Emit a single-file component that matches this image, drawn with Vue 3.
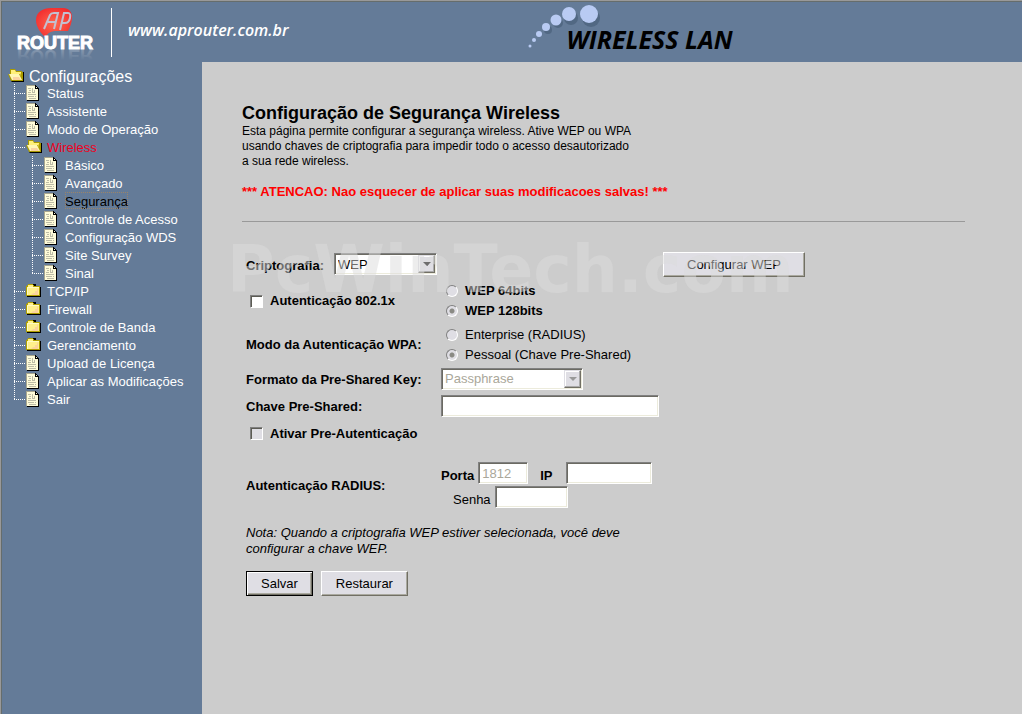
<script setup>
import { ref } from 'vue'

const menu = [
  { label: 'Status', icon: 'page' },
  { label: 'Assistente', icon: 'page' },
  { label: 'Modo de Operação', icon: 'page' },
  {
    label: 'Wireless',
    icon: 'open',
    active: true,
    children: [
      { label: 'Básico' },
      { label: 'Avançado' },
      { label: 'Segurança', current: true },
      { label: 'Controle de Acesso' },
      { label: 'Configuração WDS' },
      { label: 'Site Survey' },
      { label: 'Sinal' },
    ],
  },
  { label: 'TCP/IP', icon: 'folder' },
  { label: 'Firewall', icon: 'folder' },
  { label: 'Controle de Banda', icon: 'folder' },
  { label: 'Gerenciamento', icon: 'folder' },
  { label: 'Upload de Licença', icon: 'page' },
  { label: 'Aplicar as Modificações', icon: 'page' },
  { label: 'Sair', icon: 'page' },
]

const encryption = ref('WEP')
const keyFormat = ref('Passphrase')
const use8021x = ref(false)
const wepBits = ref('128')
const wpaMode = ref('psk')
const preAuth = ref(false)
const psk = ref('')
const radiusPort = ref('1812')
const radiusIp = ref('')
const radiusPassword = ref('')
</script>

<template>
  <div class="page">
    <svg class="defs" aria-hidden="true">
      <symbol id="icon-page" viewBox="0 0 16 16">
        <path d="M1 15h11V4h1v12H1z" fill="#000" />
        <path d="M0 0h9l3 3v12H0z" fill="#fffcd9" />
        <path d="M9 0h1v1h1v1h1v1h1v2h-1V4H9z" fill="#000" />
        <path d="M10 2h1v1h-1z" fill="#fffcd9" />
        <path d="M2 3.5h3M3 5.5h2M2 7.5h3M6.5 3v5M7 7.500h2M8.500 5v2M2 9.500h8M2 11.500h6M9 11.500h1M3 13.500h7" stroke="#bdbca6" fill="none" />
        <path d="M0 .5h9M.5 1v14" stroke="#a8a68e" fill="none" />
      </symbol>
      <symbol id="icon-folder" viewBox="0 0 16 16">
        <path d="M7 1h3v2h4v1h1v10H1v-1h6z" fill="#000" />
        <path d="M0 3h1V2h1V1h5v1h1v1h6v10H0z" fill="#b0a000" />
        <path d="M1 4h1V2h5v2h6v8H1z" fill="#fff08c" />
        <path d="M12 5v7H5l2-2h2V8h2V6z" fill="#fbd39c" />
        <path d="M1.500 12V4.500H13" stroke="#fffbc4" fill="none" />
      </symbol>
      <symbol id="icon-open" viewBox="0 0 16 16">
        <path d="M3 13h12V4h1v10H4z" fill="#000" />
        <path d="M2 1h5l1 2h6v1h1v9H3L0 6h2z" fill="#a99a00" />
        <path d="M3 2h4l1 2h5v2H3z" fill="#fff07a" />
        <path d="M1 6h10l3 6H4z" fill="#fff7b4" />
        <path d="M5 9h6l2 3H5z" fill="#fad3a0" />
        <path d="M12 5h1v4z" fill="#e9d64c" />
      </symbol>
    </svg>

    <header class="banner">
      <svg class="logo" viewBox="0 0 90 60" role="img" aria-label="AP Router">
        <defs>
          <radialGradient id="logo-red" cx="50%" cy="55%" r="60%">
            <stop offset="0" stop-color="#ff6a50" />
            <stop offset="1" stop-color="#f22c2e" />
          </radialGradient>
          <linearGradient id="logo-fade" x1="0" y1="0" x2="0" y2="1">
            <stop offset="0.300" stop-color="#fff" stop-opacity="0" />
            <stop offset="1" stop-color="#fff" stop-opacity="0.300" />
          </linearGradient>
        </defs>
        <path d="M35 33c-3-3-9-9-9-17C26 8 33 4 41 4h12c6 0 9 4 9 9 0 6-2 10-4 14H46c-5 0-8 2-11 6z" fill="url(#logo-red)" />
        <g fill="none" stroke="#c3c0d0" stroke-width="2">
          <path d="M34 25l6-14q1-2 4-2h4l-4 16M38 18h8M50 26l4-17h4q3 0 2 5t-5 5h-3" />
        </g>
        <text x="7" y="45" class="logo-word">ROUTER</text>
        <g transform="translate(0 91) scale(1 -1)" aria-hidden="true">
          <text x="7" y="45" class="logo-word logo-mirror">ROUTER</text>
        </g>
      </svg>
      <div class="rule"></div>
      <a class="site" href="#">www.aprouter.com.br</a>
      <div class="product">
        <svg class="dots" viewBox="0 0 74 48" aria-hidden="true">
          <g fill="#40566f" opacity="0.500">
            <circle cx="63" cy="17" r="9" /><circle cx="43" cy="17" r="7" />
            <circle cx="30" cy="22" r="5" /><circle cx="20" cy="29" r="4" />
          </g>
          <g fill="#b9cbf3">
            <circle cx="61" cy="13" r="9" /><circle cx="41" cy="13" r="7" />
            <circle cx="28" cy="19" r="5.500" /><circle cx="18" cy="26" r="4" />
            <circle cx="11" cy="33" r="3" /><circle cx="6" cy="39" r="2" />
            <circle cx="2" cy="45" r="1.500" />
          </g>
        </svg>
        <span class="product-name">WIRELESS LAN</span>
      </div>
    </header>

    <div class="body">
      <nav class="side" aria-label="Configurações">
        <a class="root" href="#">
          <svg class="icon"><use href="#icon-open" /></svg>Configurações
        </a>
        <ul class="tree">
          <li v-for="item in menu" :key="item.label">
            <a href="#" class="node" :class="{ active: item.active }">
              <svg class="icon"><use :href="'#icon-' + item.icon" /></svg>{{ item.label }}
            </a>
            <ul v-if="item.children" class="tree sub">
              <li v-for="child in item.children" :key="child.label">
                <a href="#" class="node" :class="{ current: child.current }">
                  <svg class="icon"><use href="#icon-page" /></svg><span>{{ child.label }}</span>
                </a>
              </li>
            </ul>
          </li>
        </ul>
      </nav>

      <main class="content">
        <h1>Configuração de Segurança Wireless</h1>
        <p class="intro">Esta página permite configurar a segurança wireless. Ative WEP ou WPA usando chaves de criptografia para impedir todo o acesso desautorizado a&nbsp;sua rede wireless.</p>
        <p class="warning">*** ATENCAO: Nao esquecer de aplicar suas modificacoes salvas! ***</p>
        <hr />

        <form class="form" @submit.prevent>
          <div class="row crypto">
            <div class="crypto-field">
              <label for="crypto">Criptografia:</label>
              <div class="select short">
                <select id="crypto" v-model="encryption">
                  <option>WEP</option>
                  <option>WPA</option>
                </select>
                <span class="arrow"></span>
              </div>
            </div>
            <button type="button" class="wide">Configurar WEP</button>
          </div>

          <div class="row pair">
            <label class="check"><input v-model="use8021x" type="checkbox" />Autenticação 802.1x</label>
            <div class="radios">
              <label class="strong"><input v-model="wepBits" type="radio" name="bits" value="64" disabled />WEP 64bits</label>
              <label class="strong"><input v-model="wepBits" type="radio" name="bits" value="128" disabled />WEP 128bits</label>
            </div>
          </div>

          <div class="row pair">
            <span class="name">Modo da Autenticação WPA:</span>
            <div class="radios">
              <label><input v-model="wpaMode" type="radio" name="wpa" value="radius" disabled />Enterprise (RADIUS)</label>
              <label><input v-model="wpaMode" type="radio" name="wpa" value="psk" disabled />Pessoal (Chave Pre-Shared)</label>
            </div>
          </div>

          <div class="row line">
            <label class="name" for="format">Formato da Pre-Shared Key:</label>
            <div class="select long">
              <select id="format" v-model="keyFormat" disabled>
                <option>Passphrase</option>
              </select>
              <span class="arrow"></span>
            </div>
          </div>

          <div class="row line">
            <label class="name" for="psk">Chave Pre-Shared:</label>
            <input id="psk" v-model="psk" class="text key" type="text" />
          </div>

          <div class="row line">
            <label class="check"><input v-model="preAuth" type="checkbox" disabled />Ativar Pre-Autenticação</label>
          </div>

          <div class="row radius">
            <span class="name">Autenticação RADIUS:</span>
            <div class="radius-fields">
              <div class="inline">
                <label class="strong" for="port">Porta</label>
                <input id="port" v-model="radiusPort" class="text port" type="text" disabled />
                <label class="strong ip-label" for="ip">IP</label>
                <input id="ip" v-model="radiusIp" class="text ip" type="text" />
              </div>
              <div class="inline second">
                <label for="pass">Senha</label>
                <input id="pass" v-model="radiusPassword" class="text pass" type="password" />
              </div>
            </div>
          </div>

          <p class="note">Nota: Quando a criptografia WEP estiver selecionada, você deve configurar a chave WEP.</p>

          <div class="actions">
            <button type="submit" class="default">Salvar</button>
            <button type="reset">Restaurar</button>
          </div>
          <div class="watermark" aria-hidden="true">PcWinTech.com</div>
        </form>
      </main>
    </div>
  </div>
</template>

<style>
body {
  background: #ccc;
}
</style>

<style scoped>
* {
  box-sizing: border-box;
}

.page {
  display: flex;
  flex-direction: column;
  min-height: 100vh;
  font: 13px/18px "Liberation Sans", Arial, sans-serif;
  color: #000;
  background: #ccc;
}

.defs {
  position: absolute;
  width: 0;
  height: 0;
}

.banner {
  display: flex;
  height: 62px;
  background: #647b98;
  border-top: 1px solid #999;
  border-left: 1px solid #999;
  box-shadow: inset 1px 1px 0 #666d6c;
}

.logo {
  flex: none;
  width: 90px;
  height: 60px;
  margin: 3px 0 0 9px;
  overflow: visible;
}

.logo-word {
  font: bold 18px "Liberation Sans", Arial, sans-serif;
  fill: #fff;
  stroke: #fff;
  stroke-width: 1px;
}

.logo-mirror {
  fill: url(#logo-fade);
  stroke: none;
}

.rule {
  flex: none;
  width: 1px;
  height: 49px;
  margin: 7px 16px 0 11px;
  background: #fff;
}

.site {
  margin-top: 17px;
  font: italic 600 16px/24px "Open Sans", sans-serif;
  color: #fff;
  text-decoration: none;
}

.product {
  display: flex;
  margin-left: 239px;
}

.dots {
  flex: none;
  width: 74px;
  height: 48px;
}

.product-name {
  margin: 22px 0 0 -35px;
  font: italic bold 25px/32px "Open Sans", sans-serif;
  white-space: nowrap;
}

.body {
  display: flex;
  flex: 1;
}

.side {
  flex: none;
  width: 202px;
  padding: 6px 0 0 7px;
  color: #fff;
  background: #647b98;
  border-left: 1px solid #999;
  box-shadow: inset 1px 0 0 #666d6c;
}

.side a {
  color: #fff;
  text-decoration: none;
  white-space: nowrap;
}

.root {
  display: flex;
  gap: 5px;
  height: 16px;
  font-size: 16px;
  line-height: 17px;
}

.root .icon {
  margin-top: 0;
}

.tree {
  margin: 0 0 0 6px;
  padding: 0;
  list-style: none;
}

.tree li {
  padding-left: 12px;
  background:
    repeating-linear-gradient(#fff 0 1px, transparent 1px 2px) 0 0 / 1px 100% no-repeat,
    repeating-linear-gradient(90deg, #fff 0 1px, transparent 1px 2px) 0 9px / 12px 1px no-repeat;
}

.tree li:last-child {
  background-size: 1px 10px, 12px 1px;
}

.node {
  display: flex;
  gap: 5px;
  height: 18px;
  line-height: 19px;
}

.icon {
  flex: none;
  width: 16px;
  height: 16px;
  margin-top: 1px;
}

.side .active {
  color: #f00020;
}

.side .current {
  color: #000;
}

.current span {
  height: 17px;
  outline: 1px dotted #9b8468;
  outline-offset: -1px;
}

.content {
  flex: 1;
  min-width: 0;
  padding: 40px 57px 40px 40px;
}

h1 {
  margin: 0;
  font-size: 18px;
  line-height: 22px;
}

.intro {
  max-width: 400px;
  margin: 0;
  font-size: 12px;
  line-height: 15px;
}

.warning {
  margin: 14px 0 20px;
  font-weight: bold;
  color: #f00;
}

hr {
  height: 1px;
  margin: 0;
  border: 0;
  background: #999;
}

.form {
  position: relative;
  padding: 30px 0 0 4px;
}

.row {
  display: flex;
}

.crypto {
  align-items: flex-start;
}

.crypto-field {
  display: flex;
  align-items: center;
  gap: 8px;
  width: 417px;
  margin-top: 1px;
  font-weight: bold;
}

.crypto-field label {
  width: 80px;
  padding-top: 4px;
}

.pair {
  align-items: center;
  margin-top: 4px;
}

.name,
.check {
  flex: none;
  width: 195px;
  font-weight: bold;
}

.check {
  display: flex;
  align-items: center;
  gap: 7px;
  padding-left: 4px;
}

.radios label {
  display: flex;
  align-items: center;
  gap: 7px;
  height: 20px;
  padding-left: 5px;
}

.strong {
  font-weight: bold;
}

input[type="checkbox"],
input[type="radio"] {
  appearance: none;
  width: 13px;
  height: 13px;
  margin: 0;
  background: #fff;
  border: 1px solid;
  border-color: #808080 #fff #fff #808080;
}

input[type="checkbox"] {
  box-shadow: inset 1px 1px 0 #5c5c54;
}

input[type="checkbox"]:disabled {
  background: #dfdee4;
}

input[type="radio"] {
  width: 12px;
  height: 12px;
  background: #dfdee4;
  border-radius: 50%;
}

input[type="radio"]:checked {
  background: radial-gradient(circle, #8a8a84 0 2px, #dfdee4 3px);
}

.line {
  align-items: center;
  height: 27px;
}

.line .name,
.line .check {
  padding-top: 2px;
}

.select {
  position: relative;
  height: 22px;
  font-weight: normal;
}

.short {
  width: 103px;
}

.long {
  width: 142px;
}

select,
.text {
  height: 22px;
  padding: 0 3px;
  font: 13px "Liberation Sans", Arial, sans-serif;
  color: #000;
  background: #fff;
  border: 1px solid;
  border-color: #808080 #fff #fff #808080;
  border-radius: 0;
  box-shadow: inset 1px 1px 0 #6b6a62, inset -1px -1px 0 #ecebdc;
  appearance: none;
}

select {
  width: 100%;
  opacity: 1;
}

select:disabled,
.text:disabled {
  color: #aaa79a;
}

.arrow {
  position: absolute;
  top: 2px;
  right: 2px;
  display: grid;
  place-items: center;
  width: 17px;
  height: 18px;
  background: #dfdee4;
  border: 1px solid;
  border-color: #dfdee4 #716f64 #716f64 #dfdee4;
  box-shadow: inset -1px -1px 0 #aaa, inset 1px 1px 0 #fff;
  pointer-events: none;
}

.arrow::after {
  content: "";
  border: 4px solid transparent;
  border-top-color: #000;
  border-bottom: 0;
}

select:disabled + .arrow::after {
  border-top-color: #999;
}

.key {
  width: 218px;
}

.radius {
  align-items: center;
  margin-top: 15px;
}

.radius .name {
  padding-top: 2px;
}

.inline {
  display: flex;
  align-items: center;
  height: 24px;
}

.inline label {
  padding-top: 5px;
}

.port {
  width: 50px;
  margin: 0 12px 0 4px;
}

.ip-label {
  width: 26px;
}

.ip {
  width: 86px;
}

.second {
  padding-left: 12px;
}

.pass {
  width: 73px;
  margin-left: 4px;
}

.note {
  max-width: 400px;
  margin: 16px 0 14px;
  font-style: italic;
  line-height: 16px;
}

.actions {
  display: flex;
  gap: 8px;
}

button {
  height: 25px;
  padding: 0 14px;
  font: 13px "Liberation Sans", Arial, sans-serif;
  color: #000;
  background: #dfdee4;
  border: 1px solid;
  border-color: #fff #716f64 #716f64 #fff;
  border-radius: 0;
  box-shadow: inset -1px -1px 0 #aaa99f;
}

.wide {
  padding: 0 23px;
}

.default {
  border-color: #000;
  box-shadow: inset 1px 1px 0 #fff, inset -1px -1px 0 #716f64, inset -2px -2px 0 #aaa99f;
}

.watermark {
  position: absolute;
  top: 11px;
  left: -15px;
  font: bold 65px/74px "DejaVu Sans", sans-serif;
  color: rgba(220, 220, 220, 0.5);
  white-space: nowrap;
  pointer-events: none;
}
</style>
